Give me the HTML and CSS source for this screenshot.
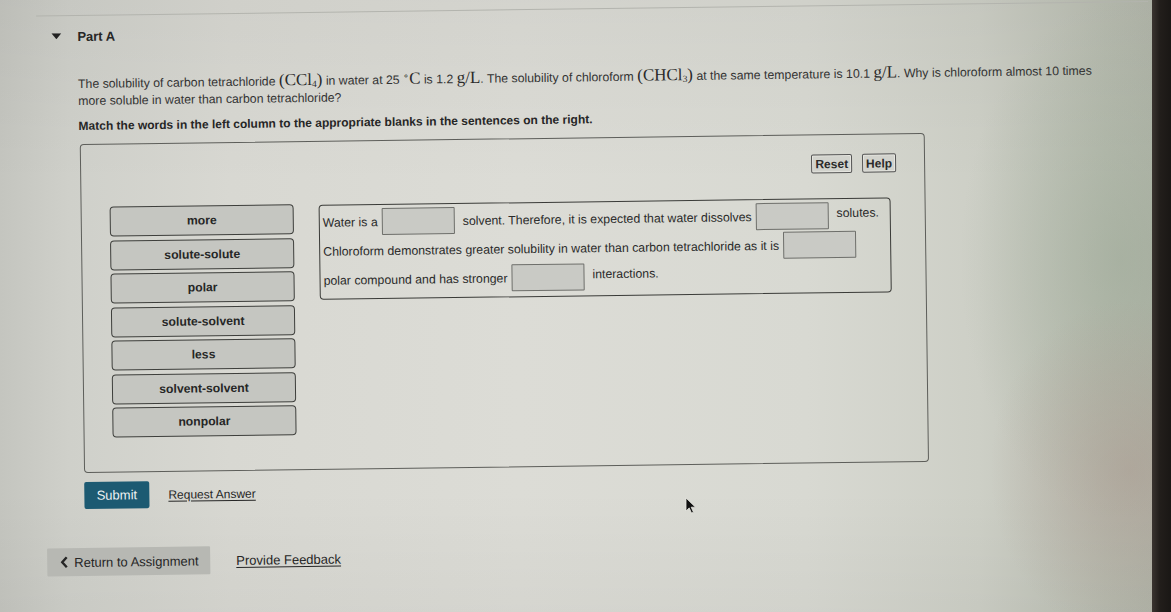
FILE: index.html
```html
<!DOCTYPE html>
<html lang="en">
<head>
<meta charset="utf-8">
<title>Part A</title>
<link rel="stylesheet" href="styles.css">
</head>
<body>
<div class="screen">
  <div class="page">
    <div class="content">
      <section class="part">
        <header class="part-head">
          <svg class="caret" width="10" height="6" viewBox="0 0 10 6" aria-hidden="true"><path d="M0 0H10L5 6Z"/></svg>
          <h2 class="part-title">Part A</h2>
        </header>
        <div class="part-body">
          <p class="question">The solubility of carbon tetrachloride <span class="m">(CCl<sub>4</sub>)</span> in water at 25 <span class="m"><sup>∘</sup>C</span> is 1.2 <span class="m">g/L</span>. The solubility of chloroform <span class="m">(CHCl<sub>3</sub>)</span> at the same temperature is 10.1 <span class="m">g/L</span>. Why is chloroform almost 10 times<br>more soluble in water than carbon tetrachloride?</p>
          <p class="instr">Match the words in the left column to the appropriate blanks in the sentences on the right.</p>

          <div class="activity">
            <div class="tools">
              <button class="tool">Reset</button>
              <button class="tool">Help</button>
            </div>
            <div class="work">
              <ul class="bank">
                <li class="chip">more</li>
                <li class="chip">solute-solute</li>
                <li class="chip">polar</li>
                <li class="chip">solute-solvent</li>
                <li class="chip">less</li>
                <li class="chip">solvent-solvent</li>
                <li class="chip">nonpolar</li>
              </ul>
              <div class="sentences">
                <div class="row">
                  <span class="txt">Water is a</span><span class="blank"></span><span class="txt">solvent. Therefore, it is expected that water dissolves</span><span class="blank"></span><span class="txt up">solutes.</span>
                </div>
                <div class="row">
                  <span class="txt">Chloroform demonstrates greater solubility in water than carbon tetrachloride as it is</span><span class="blank"></span>
                </div>
                <div class="row">
                  <span class="txt">polar compound and has stronger</span><span class="blank"></span><span class="txt up">interactions.</span>
                </div>
              </div>
            </div>
          </div>

          <div class="actions">
            <button class="submit">Submit</button>
            <a class="link" href="#">Request Answer</a>
          </div>
        </div>
      </section>

      <nav class="footer">
        <button class="return">
          <svg class="chev" width="8" height="12" viewBox="0 0 8 12" aria-hidden="true"><path d="M6.5 1L2 6l4.5 5" fill="none" stroke="currentColor" stroke-width="2.4"/></svg>
          Return to Assignment
        </button>
        <a class="link feedback" href="#">Provide Feedback</a>
      </nav>
    </div>
  </div>
  <div class="bezel"></div>
  <svg class="cursor" width="12" height="18" viewBox="0 0 12 18" aria-hidden="true"><path d="M1 1v13l3.2-3.1 2.3 5.2 2-.9-2.3-5H10.5Z" fill="#111" stroke="#e8e8e2" stroke-width=".8"/></svg>
</div>
</body>
</html>
```

FILE: styles.css
```css
* { box-sizing: border-box; }

html, body {
  margin: 0;
  height: 100%;
}

body {
  font-family: "Liberation Sans", Arial, sans-serif;
  color: #262626;
  background: #1f1c1a;
}

.screen {
  position: relative;
  display: flex;
  width: 1171px;
  height: 612px;
  overflow: hidden;
}

/* lit display surface */
.page {
  flex: 1;
  overflow: hidden;
  background:
    radial-gradient(ellipse 140px 170px at 1130px 470px, rgba(170, 150, 140, .5), rgba(170, 150, 140, 0)),
    radial-gradient(ellipse 160px 260px at 1120px 260px, rgba(150, 165, 145, .45), rgba(150, 165, 145, 0)),
    linear-gradient(to bottom, rgba(0, 0, 0, .04), rgba(0, 0, 0, 0) 30%, rgba(0, 0, 0, 0) 80%, rgba(0, 0, 0, .03)),
    linear-gradient(to right, #c4c5bf 0%, #cfd0ca 6%, #d8d8d2 20%, #dcdcd6 45%, #d8d9d2 70%, #cdcfc6 85%, #b9bdb1 96%, #b3b7ab 100%);
}

.bezel {
  width: 19px;
  background: linear-gradient(to right, #3a3430, #221e1b 40%, #1a1715);
}

.content {
  transform: rotate(-0.75deg);
  transform-origin: 80px 300px;
}

/* ---------- part header ---------- */
.part {
  margin: 15px 0 0 40px;
  border-top: 1px solid #b3b4ae;
}

.part-head {
  display: flex;
  align-items: center;
  height: 20px;
  margin-top: 10px;
  padding-left: 15px;
}

.caret {
  fill: #222;
  margin-right: 16px;
}

.part-title {
  margin: 0;
  font-size: 13px;
  font-weight: bold;
  color: #262626;
}

.part-body {
  padding-left: 41px;
}

.question {
  margin: 30px 0 0;
  font-size: 12.3px;
  line-height: 17px;
  color: #333;
  white-space: nowrap;
}

.m {
  font-family: "Liberation Serif", "Times New Roman", serif;
  font-size: 17px;
  line-height: 0;
  color: #2a2a2a;
}

.m sub { font-size: 9.5px; vertical-align: -2px; line-height: 0; }
.m sup { font-size: 9.5px; vertical-align: 5px; line-height: 0; }

.instr {
  margin: 9px 0 0;
  font-size: 12px;
  line-height: 15px;
  font-weight: bold;
  color: #262626;
}

/* ---------- matching activity ---------- */
.activity {
  width: 845px;
  height: 329px;
  margin: 10px 0 0 1px;
  padding: 19px 28px 0 28px;
  border: 1px solid #5d5e5a;
  border-radius: 4px;
}

.tools {
  display: flex;
  justify-content: flex-end;
  gap: 10px;
}

.tool {
  height: 19px;
  padding: 0 3px;
  font: bold 12px "Liberation Sans", Arial, sans-serif;
  color: #2a2a2a;
  background: #d2d3cd;
  border: 1px solid #555;
  border-radius: 2px;
  box-shadow: inset 0 0 0 1px #e6e6e0;
}

.work {
  display: flex;
  align-items: flex-start;
  margin-top: 24px;
}

.bank {
  display: flex;
  flex-direction: column;
  gap: 3.5px;
  width: 184px;
  margin: 0;
  padding: 0;
  list-style: none;
}

.chip {
  height: 30px;
  display: flex;
  align-items: center;
  justify-content: center;
  font-size: 12.2px;
  font-weight: bold;
  color: #262626;
  background: #c5c6c1;
  border: 1.5px solid #3e3f3c;
  border-radius: 4px;
}

.sentences {
  width: 572px;
  margin: 1px 0 0 25px;
  padding: 2px 3px 4px;
  border: 1.5px solid #3a3b38;
  border-radius: 4px;
}

.row {
  display: flex;
  align-items: center;
  height: 29px;
  font-size: 12.3px;
  color: #2a2a2a;
  white-space: nowrap;
}

.txt.up { align-self: flex-start; padding-top: 5px; }

.blank {
  width: 73px;
  height: 27px;
  margin: 0 8px 0 4px;
  background: #c9cac5;
  border: 1px solid #6e6f6b;
  border-radius: 1px;
}

/* ---------- actions ---------- */
.actions {
  display: flex;
  align-items: center;
  gap: 19px;
  margin: 9px 0 0 1px;
}

.submit {
  width: 65px;
  height: 27px;
  font: 13px "Liberation Sans", Arial, sans-serif;
  color: #eef2f4;
  background: #1c5a72;
  border: 0;
  border-radius: 2px;
}

.link {
  font-size: 12px;
  color: #262626;
  text-decoration: underline;
  text-underline-offset: 2px;
}

.footer {
  display: flex;
  align-items: center;
  gap: 26px;
  margin: 39px 0 0 44px;
}

.return {
  display: flex;
  align-items: center;
  gap: 6px;
  width: 163px;
  height: 28px;
  padding: 0 0 0 13px;
  font: 13px "Liberation Sans", Arial, sans-serif;
  color: #262626;
  background: #b7b8b3;
  border: 0;
  border-radius: 1px;
}

.chev { color: #262626; }

.feedback { font-size: 13px; }

/* pointer resting on the page */
.cursor {
  position: absolute;
  left: 685px;
  top: 497px;
}
```
